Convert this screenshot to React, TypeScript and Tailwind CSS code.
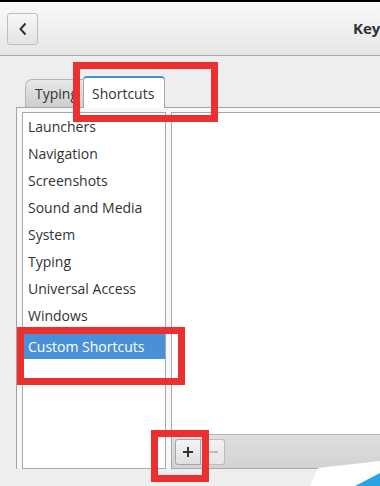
import React from "react";

// GNOME Settings — Keyboard panel, Shortcuts tab, with red annotation boxes

const CATEGORIES = [
  "Launchers",
  "Navigation",
  "Screenshots",
  "Sound and Media",
  "System",
  "Typing",
  "Universal Access",
  "Windows",
];

function BackButton() {
  return (
    <button className="flex h-[32px] w-[31px] shrink-0 items-center justify-center rounded-[3px] border border-[#bdbdbd] bg-gradient-to-b from-[#f7f7f7] to-[#e4e4e4]">
      <svg width="10" height="14" viewBox="0 0 10 14">
        <path d="M7.5 1.5 L2.5 7 L7.5 12.5" fill="none" stroke="#2e3436" strokeWidth="2" />
      </svg>
    </button>
  );
}

function RedBox({ className }: { className: string }) {
  return <div className={`pointer-events-none absolute border-[7px] border-[#ec2f2f] ${className}`} />;
}

export default function App() {
  return (
    <div className="relative flex h-[486px] w-[380px] flex-col overflow-hidden bg-[#eeeeee] font-['Open_Sans',sans-serif] text-[#2e3436]">
      <div className="h-[2px] bg-black" />

      {/* Header bar */}
      <div className="flex h-[54px] shrink-0 items-center overflow-hidden border-b border-[#a9a9a9] bg-gradient-to-b from-[#f9f9f9] to-[#e6e6e6] pl-[7px]">
        <BackButton />
        <span className="ml-[315px] shrink-0 whitespace-nowrap text-[15px] font-bold">Keyboard</span>
      </div>

      {/* Notebook */}
      <div className="flex flex-1 flex-col pl-[16px] pt-[20px]">
        <div className="flex h-[31px] items-end pl-[9px]">
          <div className="flex h-[28px] w-[62px] items-center rounded-tl-[7px] rounded-tr-[4px] border border-b-0 border-[#b5b5b5] bg-gradient-to-b from-[#e8e8e8] to-[#cdcdcd] pl-[9px] text-[14px]">
            Typing
          </div>
          <div className="relative z-10 -mb-px -ml-[4px] flex h-[32px] w-[82px] items-center rounded-t-[4px] border-x border-t-2 border-x-[#a8a8a8] border-t-[#4a90d9] bg-white pl-[8px] text-[14px]">
            Shortcuts
          </div>
        </div>

        <div className="flex gap-[5px] border-l border-t border-[#a4a4a4] bg-[#f8f8f8] pl-[5px] pt-[4px]">
          {/* Category list */}
          <div className="flex h-[357px] w-[144px] shrink-0 flex-col border border-[#a8a8a8] bg-white text-[14px]">
            {CATEGORIES.map((c) => (
              <div key={c} className="flex h-[27px] shrink-0 items-center pl-[5px]">
                {c}
              </div>
            ))}
            <div className="mt-[4px] flex h-[26px] shrink-0 items-center bg-[#4a90d9] pl-[5px] text-white">
              Custom Shortcuts
            </div>
          </div>

          {/* Shortcut list */}
          <div className="flex h-[357px] flex-1 flex-col border border-r-0 border-[#a8a8a8] bg-white">
            <div className="flex-1" />
            <div className="flex h-[34px] items-center border-t border-[#b4b4b4] bg-gradient-to-b from-[#dedede] to-[#d3d3d3] pl-[3px]">
              <div className="flex h-[26px] w-[26px] items-center justify-center rounded-l-[3px] border border-[#a4a4a4] bg-gradient-to-b from-[#f5f5f5] to-[#dedede]">
                <svg width="12" height="12" viewBox="0 0 12 12">
                  <path d="M6 1v10M1 6h10" stroke="#2e3436" strokeWidth="2" />
                </svg>
              </div>
              <div className="flex h-[26px] w-[24px] items-center justify-center rounded-r-[3px] border border-l-0 border-[#bcbcbc] bg-gradient-to-b from-[#f2f2f2] to-[#e6e6e6]">
                <svg width="12" height="12" viewBox="0 0 12 12">
                  <path d="M1 6h10" stroke="#bcbcbc" strokeWidth="2" />
                </svg>
              </div>
            </div>
          </div>
        </div>
      </div>

      {/* watermark corner */}
      <svg className="pointer-events-none absolute bottom-0 right-0" width="70" height="28" viewBox="0 0 70 28">
        <polygon points="8,10 70,3 70,28 0,28" fill="#ffffff" />
        <polygon points="45,28 70,15 70,28" fill="#2ba3e3" />
      </svg>

      {/* Annotations */}
      <RedBox className="left-[73px] top-[62px] h-[60px] w-[145px]" />
      <RedBox className="left-[17px] top-[327px] h-[58px] w-[168px]" />
      <RedBox className="left-[151px] top-[430px] h-[52px] w-[58px]" />
    </div>
  );
}
